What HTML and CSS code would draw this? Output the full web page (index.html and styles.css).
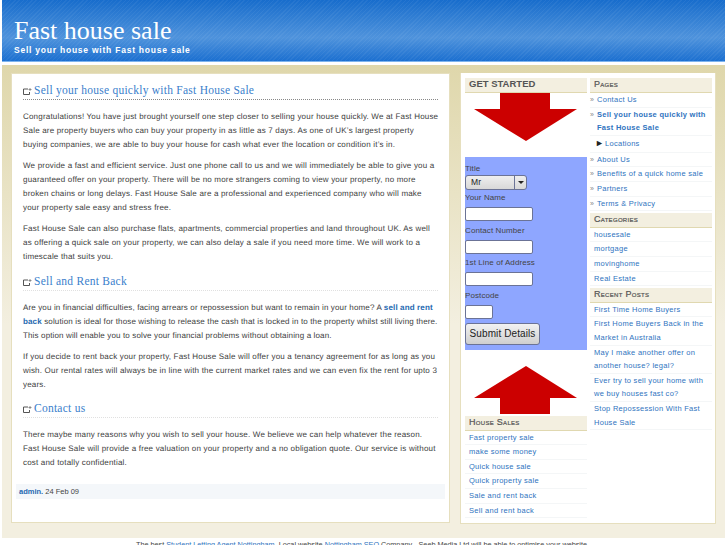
FILE: index.html
```html
<!DOCTYPE html>
<html lang="en">
<head>
<meta charset="utf-8">
<title>Fast house sale</title>
<link rel="stylesheet" href="styles.css">
</head>
<body>
<header class="masthead">
  <h1 class="site-title">Fast house sale</h1>
  <p class="tagline">Sell your house with Fast house sale</p>
</header>
<div class="page">
  <main class="content">
    <h2 class="post-title first"><svg class="post-icon" viewBox="0 0 9 8" width="9" height="8"><path d="M.5 7.5V2H5M.5 7.5H6.5V5" fill="none" stroke="#555" stroke-width="1"/><path d="M5.5 2.5H8.5M7 1V4" stroke="#777" stroke-width=".8"/></svg><a>Sell your house quickly with Fast House Sale</a></h2>
    <p>Congratulations! You have just brought yourself one step closer to selling your house quickly. We at Fast House Sale are property buyers who can buy your property in as little as 7 days. As one of UK’s largest property buying companies, we are able to buy your house for cash what ever the location or condition it’s in.</p>
    <p>We provide a fast and efficient service. Just one phone call to us and we will immediately be able to give you a guaranteed offer on your property. There will be no more strangers coming to view your property, no more broken chains or long delays. Fast House Sale are a professional and experienced company who will make your property sale easy and stress free.</p>
    <p>Fast House Sale can also purchase flats, apartments, commercial properties and land throughout UK. As well as offering a quick sale on your property, we can also delay a sale if you need more time. We will work to a timescale that suits you.</p>
    <h2 class="post-title"><svg class="post-icon" viewBox="0 0 9 8" width="9" height="8"><path d="M.5 7.5V2H5M.5 7.5H6.5V5" fill="none" stroke="#555" stroke-width="1"/><path d="M5.5 2.5H8.5M7 1V4" stroke="#777" stroke-width=".8"/></svg><a>Sell and Rent Back</a></h2>
    <p class="tight">Are you in financial difficulties, facing arrears or repossession but want to remain in your home? A <a class="strong-link">sell and rent back</a> solution is ideal for those wishing to release the cash that is locked in to the property whilst still living there. This option will enable you to solve your financial problems without obtaining a loan.</p>
    <p>If you decide to rent back your property, Fast House Sale will offer you a tenancy agreement for as long as you wish. Our rental rates will always be in line with the current market rates and we can even fix the rent for upto 3 years.</p>
    <h2 class="post-title"><svg class="post-icon" viewBox="0 0 9 8" width="9" height="8"><path d="M.5 7.5V2H5M.5 7.5H6.5V5" fill="none" stroke="#555" stroke-width="1"/><path d="M5.5 2.5H8.5M7 1V4" stroke="#777" stroke-width=".8"/></svg><a>Contact us</a></h2>
    <p>There maybe many reasons why you wish to sell your house. We believe we can help whatever the reason. Fast House Sale will provide a free valuation on your property and a no obligation quote. Our service is without cost and totally confidential.</p>
    <div class="meta"><a class="strong-link">admin.</a> 24 Feb 09</div>
  </main>
  <aside class="sidebar">
    <div class="col">
      <h3 class="started">GET STARTED</h3>
      <svg class="arrow" viewBox="0 0 122 48" width="122" height="48"><path d="M35 0H85V16H112L61 48L9 16H35Z" fill="#cc0000"/></svg>
      <form class="lead">
        <label>Title</label>
        <div class="select"><span>Mr</span><b><i></i></b></div>
        <label>Your Name</label>
        <input class="field" type="text">
        <label>Contact Number</label>
        <input class="field" type="text">
        <label>1st Line of Address</label>
        <input class="field" type="text">
        <label>Postcode</label>
        <input class="field short" type="text">
        <button class="submit" type="button">Submit Details</button>
      </form>
      <svg class="arrow up" viewBox="0 0 122 48" width="122" height="48"><path d="M35 48H85V32H112L61 0L9 32H35Z" fill="#cc0000"/></svg>
      <h3 class="widget">House Sales</h3>
      <ul class="links">
        <li><a>Fast property sale</a></li>
        <li><a>make some money</a></li>
        <li><a>Quick house sale</a></li>
        <li><a>Quick property sale</a></li>
        <li><a>Sale and rent back</a></li>
        <li><a>Sell and rent back</a></li>
      </ul>
    </div>
    <div class="col">
      <h3 class="widget">Pages</h3>
      <ul class="links nav">
        <li><a>Contact Us</a></li>
        <li class="current"><a>Sell your house quickly with Fast House Sale</a></li>
        <li class="sub"><a>Locations</a></li>
        <li><a>About Us</a></li>
        <li><a>Benefits of a quick home sale</a></li>
        <li><a>Partners</a></li>
        <li><a>Terms &amp; Privacy</a></li>
      </ul>
      <h3 class="widget">Categories</h3>
      <ul class="links">
        <li><a>housesale</a></li>
        <li><a>mortgage</a></li>
        <li><a>movinghome</a></li>
        <li><a>Real Estate</a></li>
      </ul>
      <h3 class="widget">Recent Posts</h3>
      <ul class="links">
        <li><a>First Time Home Buyers</a></li>
        <li><a>First Home Buyers Back in the Market in Australia</a></li>
        <li><a>May I make another offer on another house? legal?</a></li>
        <li><a>Ever try to sell your home with we buy houses fast co?</a></li>
        <li><a>Stop Repossession With Fast House Sale</a></li>
      </ul>
    </div>
  </aside>
</div>
<footer class="foot">The best <a>Student Letting Agent Nottingham</a>. Local website <a>Nottingham SEO</a> Company - Seeb Media Ltd will be able to optimise your website</footer>
</body>
</html>
```
FILE: styles.css
```css
* { box-sizing: border-box; }
html, body { margin: 0; height: 545px; overflow: hidden; background: #fff; }
body { padding: 0 2px; font: 8.5px/14px "Liberation Sans", Arial, sans-serif; color: #444; }
a { color: #2f74c0; }
.masthead {
  height: 62px; padding: 17px 12px 0;
  color: #fff; border-bottom: 1px solid #7db4ee;
  background:
    repeating-linear-gradient(135deg, rgba(255,255,255,.05) 0 1px, transparent 1px 3px),
    linear-gradient(#186dcc 0, #4f93dc 62%, #1c70d0 100%);
}
.site-title { margin: 0; font: 400 26px/27px "Liberation Serif", serif; }
.tagline { margin: 1px 0 0; font: 700 8.5px/11px "Liberation Sans", sans-serif; letter-spacing: .77px; }
.page {
  margin-top: 3px; height: 473px; padding: 8px 9px 0;
  display: flex; gap: 10px; align-items: flex-start;
  background: linear-gradient(#dfd7ab 0, #f3efe0 55%, #f3efe0 100%);
}
.content {
  width: 441px; height: 450px; padding: 8px 11px 0;
  background: #fff; border: 1px solid #e6dfbe;
}
.post-title {
  margin: 8.5px 0 10px; display: flex; align-items: center; gap: 2px;
  font: 400 11.5px/17px "Liberation Serif", serif; letter-spacing: .25px;
  border-bottom: 1px dotted #e0e0e0;
}
.post-title.first { margin-top: 0; border-bottom-color: #888; }
.post-title a { color: #3a80cc; }
.post-icon { margin-top: 1px; }
.content p { margin: 0 -1px 7px 0; font-size: 8px; letter-spacing: .19px; text-rendering: geometricPrecision; color: #3c3c3c; }
.content p.tight { letter-spacing: .14px; }
.strong-link { font-weight: 700; color: #2468b0; }
.meta {
  margin: 14px -7px 0 -7px; padding: 0 3px; height: 15px; line-height: 15px; background: #f4f7fa; font-size: 7.5px;
}
.sidebar {
  width: 256px; height: 451px; padding: 5px 4px 0; display: flex; gap: 3px;
  background: #fff; border: 1px solid #e6dfbe; border-top: 0;
}
.col { width: 122px; flex: none; }
.started {
  margin: 0; height: 15px; font: 700 9.5px/12px "Liberation Sans", sans-serif; color: #555;
  padding-left: 4px; background: #f3efe0; border-bottom: 1px solid #e0d8b0;
}
.arrow { display: block; margin-bottom: 16px; }
.arrow.up { margin: 16px 0 1px; }
.lead { background: #8ea6ff; height: 193px; padding-top: 5px; color: #444; letter-spacing: .1px; }
.lead label { display: block; font-size: 8px; line-height: 13px; }
.select {
  width: 62px; height: 15px; margin-bottom: 1px; display: flex; justify-content: space-between;
  background: linear-gradient(#efefef, #d8d8d8); border: 1px solid #6b7396; border-radius: 3px;
  font-size: 8.5px; line-height: 13px; padding-left: 5px; color: #222;
}
.select b { width: 12px; border-left: 1px solid #6b7396; display: flex; align-items: center; justify-content: center; }
.select i { border: 3px solid transparent; border-top: 3px solid #222; border-bottom: 0; }
.field {
  display: block; width: 68px; height: 14px; margin: 3px 0 2.5px; background: #fff;
  border: 1px solid #6b7396; border-radius: 2px; padding: 0;
}
.field.short { width: 28px; }
.submit {
  display: block; width: 75px; height: 22px; padding: 0; margin-top: 4px;
  font: 10px "Liberation Sans", sans-serif; color: #222; letter-spacing: .1px;
  background: linear-gradient(#f2f2f2, #cfcfcf); border: 1px solid #6b7396; border-radius: 3px;
}
.widget {
  margin: 1.6px 0 0; height: 15px; padding-left: 4px;
  font: 400 9px/13px "Liberation Sans", sans-serif; font-variant: small-caps; color: #555;
  letter-spacing: .3px; background: #f3efe0; border-bottom: 1px solid #e0d8b0;
  -webkit-text-stroke: .2px #555;
}
.col:last-child .widget:first-child { margin-top: 0; }
.links { list-style: none; margin: 0; padding: 0; font-size: 7.5px; line-height: 13.6px; letter-spacing: .28px; }
.links li { padding: 0 4px; border-bottom: 1px solid #f4f6f7; }
.nav li { padding-left: 7px; position: relative; }
.nav li::before { content: "»"; position: absolute; left: 0; color: #888; font-size: 7px; }
.nav .current a { font-weight: 700; }
.nav .sub { padding: 1.5px 4px 1px 15px; }
.nav .sub::before { content: "►"; left: 5px; color: #222; font-size: 9px; }
.foot {
  margin-top: 1px; height: 8px; text-align: center; font-size: 7.25px; line-height: 11px; color: #444;
  white-space: nowrap; padding-right: 4px;
}
```
